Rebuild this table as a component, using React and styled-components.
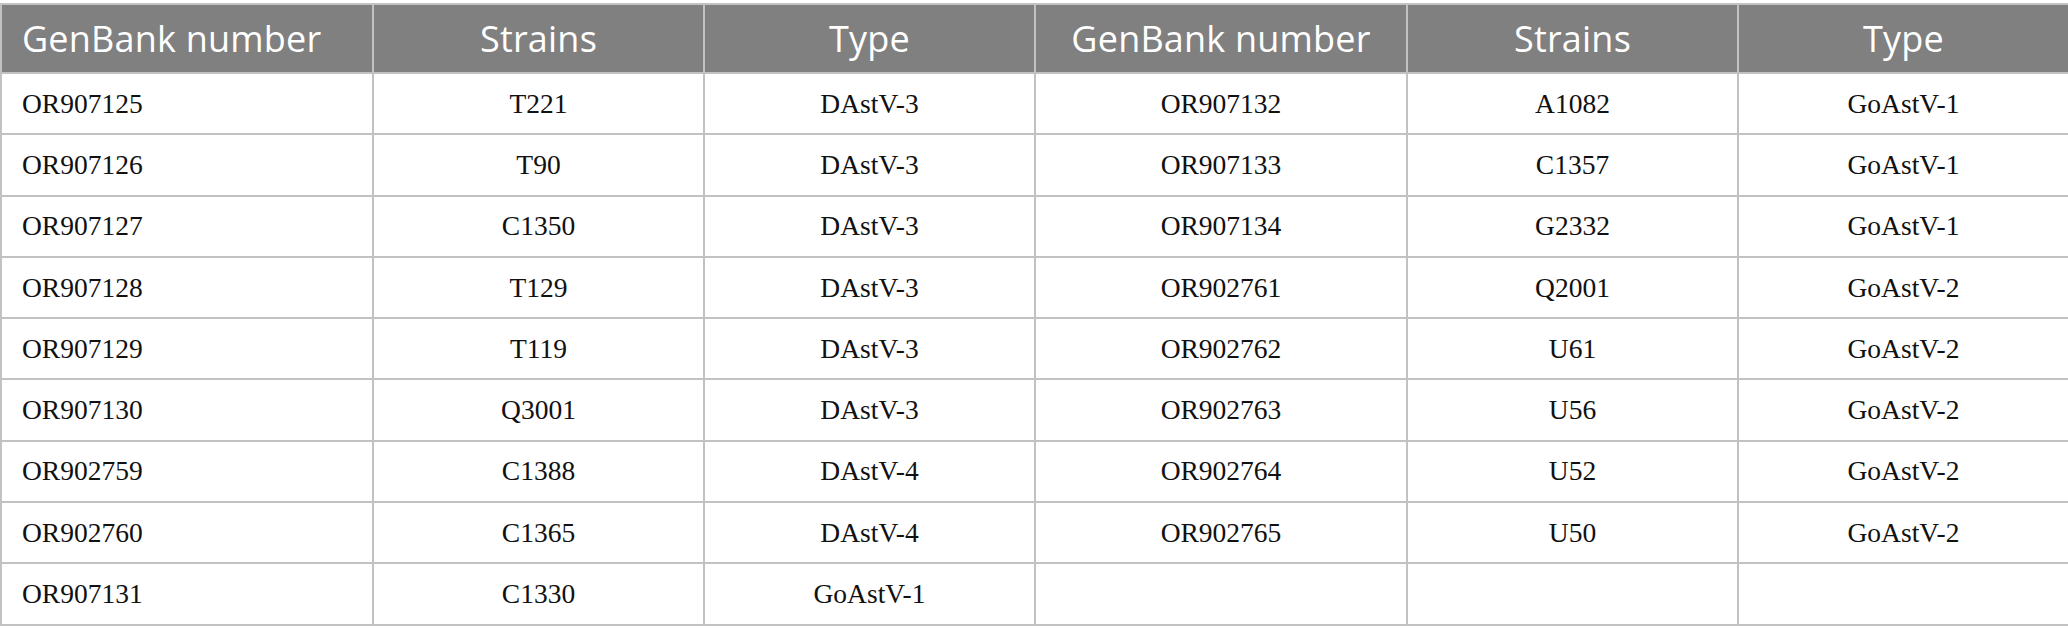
import React from 'react'
import styled, { createGlobalStyle } from 'styled-components'

const GlobalStyle = createGlobalStyle`
  html, body {
    margin: 0;
    padding: 0;
    background: #fff;
  }
`

const Wrap = styled.div`
  padding-top: 3px;
  width: 2068px;
`

const Table = styled.table`
  width: 2068px;
  table-layout: fixed;
  border-collapse: collapse;
  border: 2px solid #c2c2c2;
`

const HeadCell = styled.th`
  height: 67px;
  padding: 0 20px;
  background: #7f807f;
  color: #fff;
  font-family: 'Open Sans', 'Noto Sans', sans-serif;
  font-weight: 400;
  font-size: 36px;
  letter-spacing: 0.2px;
  text-align: ${(p) => (p.left ? 'left' : 'center')};
  border: 2px solid #c2c2c2;
  border-top: none;
  white-space: nowrap;
`

const Cell = styled.td`
  height: 59.3px;
  padding: 0 20px;
  color: #111;
  font-family: 'Liberation Serif', 'Times New Roman', serif;
  font-size: 27.5px;
  text-align: ${(p) => (p.left ? 'left' : 'center')};
  border: 2px solid #c2c2c2;
  white-space: nowrap;
`

const widths = [372, 331, 331, 372, 331, 331]

const rows = [
  ['OR907125', 'T221', 'DAstV-3', 'OR907132', 'A1082', 'GoAstV-1'],
  ['OR907126', 'T90', 'DAstV-3', 'OR907133', 'C1357', 'GoAstV-1'],
  ['OR907127', 'C1350', 'DAstV-3', 'OR907134', 'G2332', 'GoAstV-1'],
  ['OR907128', 'T129', 'DAstV-3', 'OR902761', 'Q2001', 'GoAstV-2'],
  ['OR907129', 'T119', 'DAstV-3', 'OR902762', 'U61', 'GoAstV-2'],
  ['OR907130', 'Q3001', 'DAstV-3', 'OR902763', 'U56', 'GoAstV-2'],
  ['OR902759', 'C1388', 'DAstV-4', 'OR902764', 'U52', 'GoAstV-2'],
  ['OR902760', 'C1365', 'DAstV-4', 'OR902765', 'U50', 'GoAstV-2'],
  ['OR907131', 'C1330', 'GoAstV-1', '', '', ''],
]

const headers = ['GenBank number', 'Strains', 'Type', 'GenBank number', 'Strains', 'Type']

export default function App() {
  return (
    <Wrap>
      <GlobalStyle />
      <Table>
        <colgroup>
          {widths.map((w, i) => (
            <col key={i} style={{ width: w }} />
          ))}
        </colgroup>
        <thead>
          <tr>
            {headers.map((h, i) => (
              <HeadCell key={i} left={i === 0}>
                {h}
              </HeadCell>
            ))}
          </tr>
        </thead>
        <tbody>
          {rows.map((r, ri) => (
            <tr key={ri}>
              {r.map((c, ci) => (
                <Cell key={ci} left={ci === 0}>
                  {c}
                </Cell>
              ))}
            </tr>
          ))}
        </tbody>
      </Table>
    </Wrap>
  )
}
